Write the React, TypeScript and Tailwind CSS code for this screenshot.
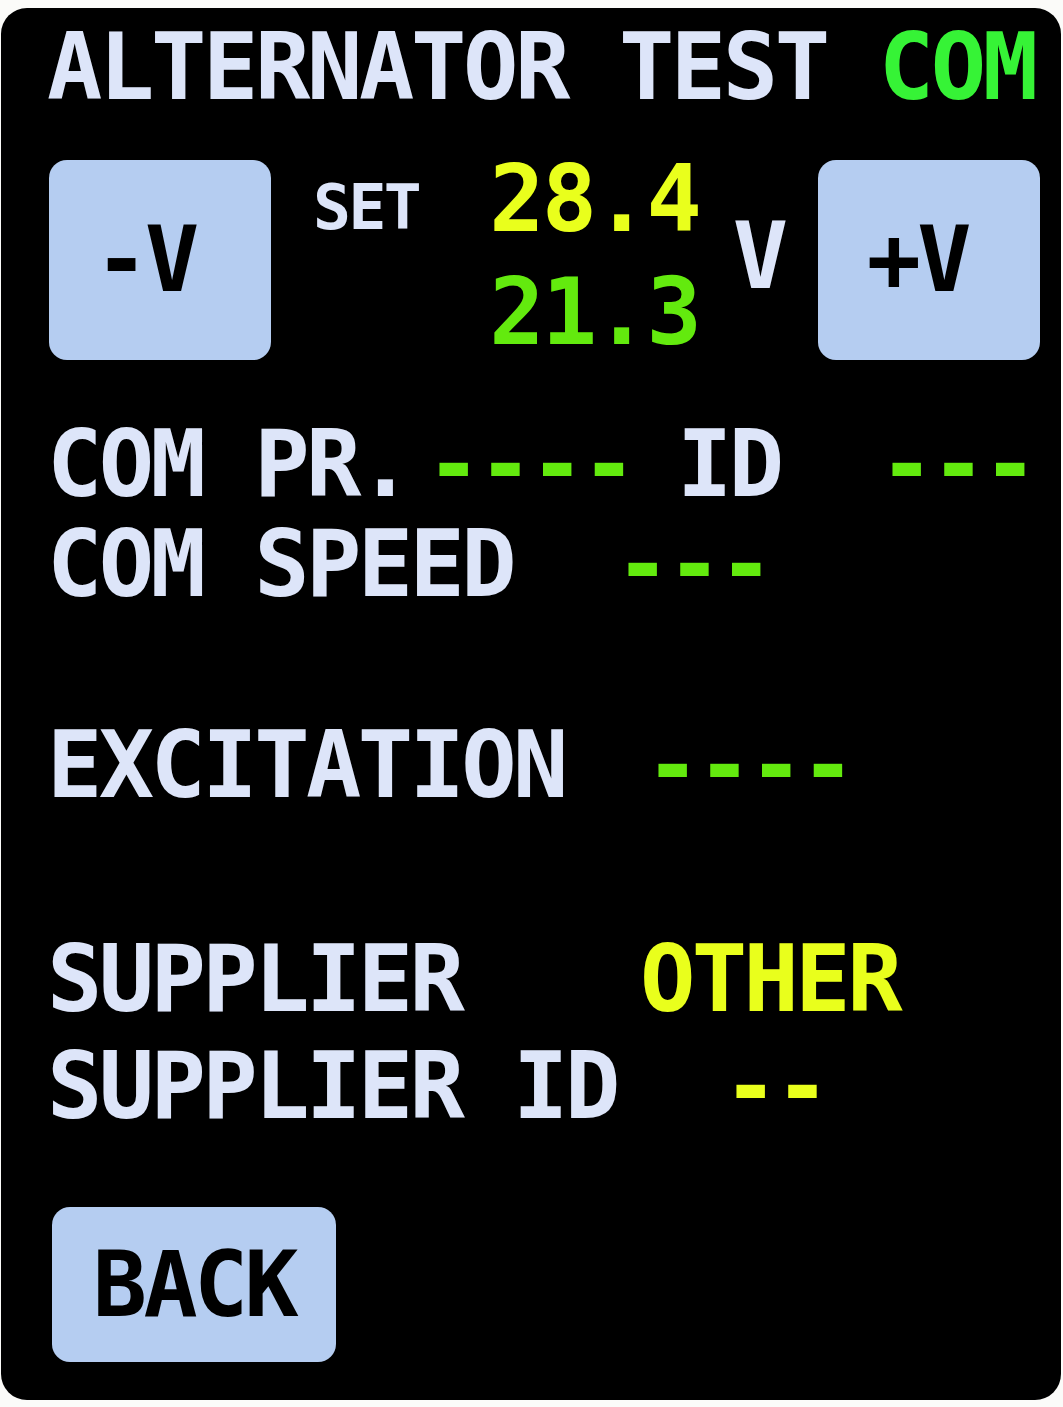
// Alternator test screen · COM mode
// Panel-style HMI: one mono face, fixed columns for the value fields.

const MONO = "font-['DejaVu_Sans_Mono',monospace] font-bold";

type Row = {
  label: string;
  value: string;
  tone: "green" | "yellow";
  /** label column width so the value lands on its screen column */
  labelW: string;
  gap: string;
};

const TONE = {
  green: "text-[#63ea0e]",
  yellow: "text-[#e9ff1c]",
};

function ValueRow({ label, value, tone, labelW, gap }: Row) {
  return (
    <div className={`${gap} flex h-[92px] text-[92px] leading-none tracking-[-3.6px]`}>
      <span className={`${labelW} shrink-0 text-[#dde5f9] whitespace-pre`}>{label}</span>
      <span className={`${TONE[tone]} whitespace-pre`}>{value}</span>
    </div>
  );
}

function PadButton({ text, size }: { text: string; size: string }) {
  return (
    <button
      className={`${size} rounded-[18px] bg-[#b5cdf1] flex items-center justify-center text-black text-[90px] leading-none tracking-[-3.6px] ${MONO}`}
    >
      {text}
    </button>
  );
}

export default function App() {
  return (
    <div className="w-[1063px] h-[1407px] bg-[#fbfbf9] pt-[8px] pl-[1px]">
      <div className={`w-[1060px] h-[1392px] bg-black rounded-[26px] pl-[46px] pt-[14px] flex flex-col ${MONO}`}>
        {/* title */}
        <div className="h-[92px] text-[92px] leading-none tracking-[-3.4px] whitespace-pre">
          <span className="text-[#dde5f9]">ALTERNATOR TEST </span>
          <span className="text-[#36f336]">COM</span>
        </div>

        {/* voltage setpoint */}
        <div className="mt-[46px] flex items-start">
          <PadButton text="-V" size="ml-[2px] w-[222px] h-[200px] pr-[30px]" />
          <span className="ml-[42px] mt-[16px] text-[63px] leading-none tracking-[-2.5px] text-[#dde5f9]">
            SET
          </span>
          <div className="ml-[70px] mt-[-6px] flex flex-col text-[92px] leading-none tracking-[-3px]">
            <span className="h-[92px] text-[#e9ff1c]">28.4</span>
            <span className="mt-[21px] h-[92px] text-[#63ea0e]">21.3</span>
          </div>
          <span className="ml-[34px] mt-[51px] text-[92px] leading-none text-[#dde5f9]">V</span>
          <PadButton text="+V" size="ml-[30px] w-[222px] h-[200px] pr-[24px]" />
        </div>

        <div className="mt-[59px] flex h-[92px] text-[92px] leading-none tracking-[-3.6px] whitespace-pre">
          <span className="w-[379px] shrink-0 text-[#dde5f9]">COM PR.</span>
          <span className="w-[251px] shrink-0 text-[#63ea0e]">----</span>
          <span className="w-[202px] shrink-0 text-[#dde5f9]">ID</span>
          <span className="text-[#63ea0e]">---</span>
        </div>
        <ValueRow label="COM SPEED" value="---" tone="green" labelW="w-[568px]" gap="mt-[8px]" />
        <ValueRow label="EXCITATION" value="----" tone="green" labelW="w-[598px]" gap="mt-[109px]" />
        <ValueRow label="SUPPLIER" value="OTHER" tone="yellow" labelW="w-[593px]" gap="mt-[122px]" />
        <ValueRow label="SUPPLIER ID" value="--" tone="yellow" labelW="w-[676px]" gap="mt-[15px]" />

        <PadButton text="BACK" size="mt-[74px] ml-[5px] w-[284px] h-[155px]" />
      </div>
    </div>
  );
}
